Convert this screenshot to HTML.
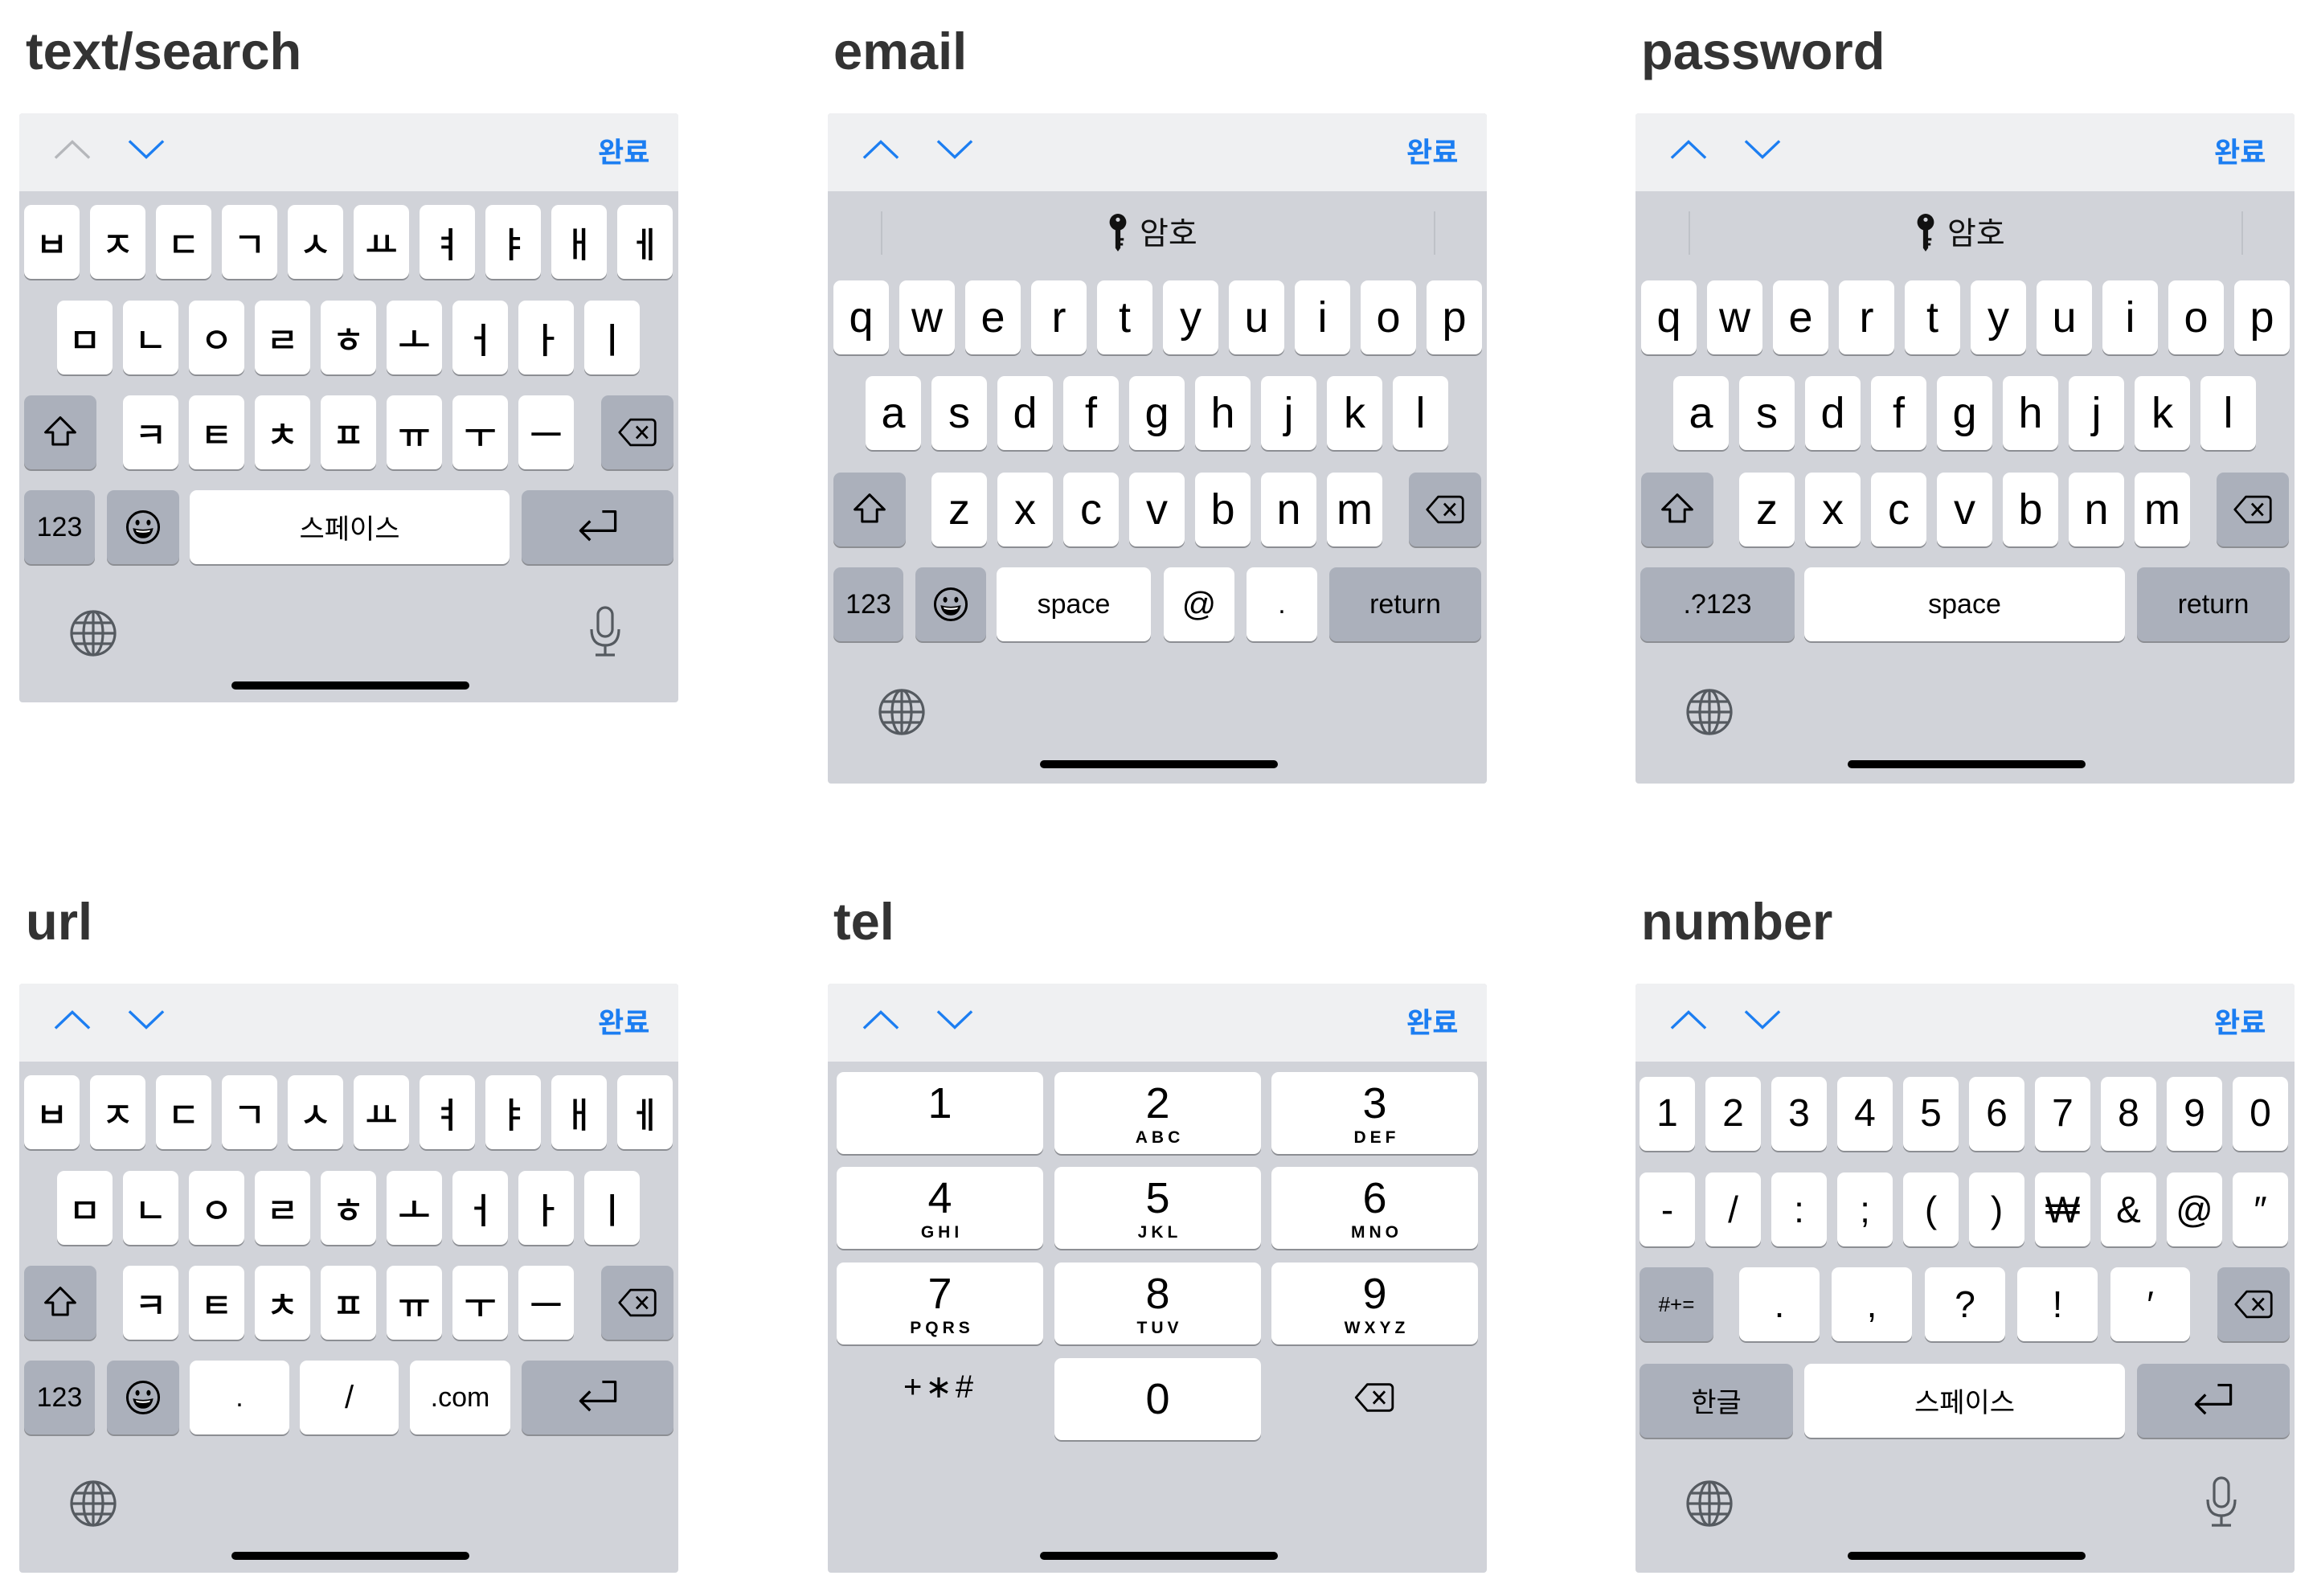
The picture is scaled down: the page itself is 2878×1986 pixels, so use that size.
<!DOCTYPE html>
<html><head><meta charset="utf-8"><style>
*{margin:0;padding:0;box-sizing:border-box}
body{width:2878px;height:1986px;background:#fff;position:relative;overflow:hidden;font-family:"Liberation Sans","Noto Sans CJK KR",sans-serif;color:#000}
.t{position:absolute;font-size:65px;font-weight:bold;color:#333;line-height:1}
.p{position:absolute;width:820px;background:#d1d3d9;border-radius:4px;overflow:hidden}
.hd{position:absolute;left:0;top:0;width:820px;height:97px;background:#eff0f2}
.k{position:absolute;height:92px;background:#fff;border-radius:9px;box-shadow:0 2px 0 #8c8e93;display:flex;align-items:center;justify-content:center;font-size:54px;line-height:1}
.g{background:#abb0bb}
.j{font-size:44px;font-family:"Noto Sans CJK KR",sans-serif;font-weight:500}
.s{font-size:34px}
.done{position:absolute;left:720px;top:24px;font-size:35px;color:#1c7ef2;font-family:"Noto Sans CJK KR",sans-serif;font-weight:bold;line-height:1.3}
.ch{position:absolute;top:30px}
.hb{position:absolute;height:10px;border-radius:5px;background:#000}
.ic{position:absolute}
.tk{position:absolute;height:102px;width:257px;background:#fff;border-radius:9px;box-shadow:0 2px 0 #8c8e93;text-align:center}
.tk b{display:block;font-weight:normal;font-size:54px;line-height:1;margin-top:12px}
.tk i{display:block;font-style:normal;font-weight:bold;font-size:21px;letter-spacing:5px;margin-top:4px;padding-left:5px}
</style></head><body>

<svg width="0" height="0" style="position:absolute">
<defs>
<symbol id="up" viewBox="0 0 50 30"><path d="M3 26 L25 5 L47 26" fill="none" stroke="currentColor" stroke-width="3.5"/></symbol>
<symbol id="dn" viewBox="0 0 50 30"><path d="M3 4 L25 25 L47 4" fill="none" stroke="currentColor" stroke-width="3.5"/></symbol>
<symbol id="shift" viewBox="0 0 40 40"><path d="M20 4 L4 20 H12 V33 H28 V20 H36 Z" fill="none" stroke="#000" stroke-width="2.6" stroke-linejoin="round"/></symbol>
<symbol id="bs" viewBox="0 0 46 34"><path d="M15 2 H40 a4 4 0 0 1 4 4 V28 a4 4 0 0 1 -4 4 H15 L2 17 Z" fill="none" stroke="#000" stroke-width="2.6" stroke-linejoin="round"/><path d="M22 10 L35 24 M35 10 L22 24" stroke="#000" stroke-width="2.6"/></symbol>
<symbol id="emo" viewBox="0 0 40 40"><circle cx="20" cy="20" r="17" fill="none" stroke="#000" stroke-width="2.6"/><ellipse cx="14" cy="15" rx="2.2" ry="3" fill="#000"/><ellipse cx="26" cy="15" rx="2.2" ry="3" fill="#000"/><path d="M9 21 Q20 24 31 21 Q29 32 20 32 Q11 32 9 21 Z" fill="#000"/><path d="M12 23 Q20 25 28 23 L27 25 Q20 27 13 25Z" fill="#fff"/></symbol>
<symbol id="ret" viewBox="0 0 50 44"><path d="M43 4 H45 V26 H6 M16 15 L5 26 L16 37" fill="none" stroke="#000" stroke-width="3" stroke-linejoin="round"/><path d="M30 4 H45" stroke="#000" stroke-width="3"/></symbol>
<symbol id="globe" viewBox="0 0 60 60"><g fill="none" stroke="#555a60" stroke-width="3.2"><circle cx="30" cy="30" r="27"/><ellipse cx="30" cy="30" rx="12" ry="27"/><path d="M30 3 V57 M3 30 H57 M7 17 H53 M7 43 H53"/></g></symbol>
<symbol id="mic" viewBox="0 0 44 66"><g fill="none" stroke="#555a60" stroke-width="3.2"><rect x="13" y="3" width="18" height="36" rx="9"/><path d="M5 30 Q5 50 22 50 Q39 50 39 30 M22 50 V62 M10 62 H34"/></g></symbol>
<symbol id="key" viewBox="0 0 24 50"><circle cx="12" cy="11" r="10" fill="#111"/><circle cx="12" cy="8" r="2.5" fill="#d1d3d9"/><path d="M9 18 H15 V42 L12 46 L9 42 Z M15 30 H19 V33 H15 Z M15 36 H18 V39 H15Z" fill="#111"/></symbol>
</defs></svg>

<div class="t" style="left:32px;top:31px">text/search</div>
<div class="t" style="left:1037px;top:31px">email</div>
<div class="t" style="left:2042px;top:31px">password</div>
<div class="t" style="left:32px;top:1114px">url</div>
<div class="t" style="left:1037px;top:1114px">tel</div>
<div class="t" style="left:2042px;top:1114px">number</div>

<!-- TEXT/SEARCH -->
<div class="p" style="left:24px;top:141px;height:733px">
<div class="hd"></div>
<svg class="ch" style="left:42px;color:#b5b7bb" width="48" height="30"><use href="#up"/></svg>
<svg class="ch" style="left:134px;color:#1c7ef2" width="48" height="30"><use href="#dn"/></svg>
<div class="done">완료</div>
<div class="k j" style="left:6px;top:114px;width:69px">ㅂ</div><div class="k j" style="left:88px;top:114px;width:69px">ㅈ</div><div class="k j" style="left:170px;top:114px;width:69px">ㄷ</div><div class="k j" style="left:252px;top:114px;width:69px">ㄱ</div><div class="k j" style="left:334px;top:114px;width:69px">ㅅ</div><div class="k j" style="left:416px;top:114px;width:69px">ㅛ</div><div class="k j" style="left:498px;top:114px;width:69px">ㅕ</div><div class="k j" style="left:580px;top:114px;width:69px">ㅑ</div><div class="k j" style="left:662px;top:114px;width:69px">ㅐ</div><div class="k j" style="left:744px;top:114px;width:69px">ㅔ</div>
<div class="k j" style="left:47px;top:233px;width:69px">ㅁ</div><div class="k j" style="left:129px;top:233px;width:69px">ㄴ</div><div class="k j" style="left:211px;top:233px;width:69px">ㅇ</div><div class="k j" style="left:293px;top:233px;width:69px">ㄹ</div><div class="k j" style="left:375px;top:233px;width:69px">ㅎ</div><div class="k j" style="left:457px;top:233px;width:69px">ㅗ</div><div class="k j" style="left:539px;top:233px;width:69px">ㅓ</div><div class="k j" style="left:621px;top:233px;width:69px">ㅏ</div><div class="k j" style="left:703px;top:233px;width:69px">ㅣ</div>
<div class="k g" style="left:6px;top:351px;width:90px"><svg width="46" height="46"><use href="#shift"/></svg></div>
<div class="k j" style="left:129px;top:351px;width:69px">ㅋ</div><div class="k j" style="left:211px;top:351px;width:69px">ㅌ</div><div class="k j" style="left:293px;top:351px;width:69px">ㅊ</div><div class="k j" style="left:375px;top:351px;width:69px">ㅍ</div><div class="k j" style="left:457px;top:351px;width:69px">ㅠ</div><div class="k j" style="left:539px;top:351px;width:69px">ㅜ</div><div class="k j" style="left:621px;top:351px;width:69px">ㅡ</div>
<div class="k g" style="left:724px;top:351px;width:90px"><svg width="50" height="36"><use href="#bs"/></svg></div>
<div class="k g s" style="left:6px;top:469px;width:88px">123</div>
<div class="k g" style="left:109px;top:469px;width:90px"><svg width="46" height="46"><use href="#emo"/></svg></div>
<div class="k s" style="left:212px;top:469px;width:398px;font-family:'Noto Sans CJK KR',sans-serif">스페이스</div>
<div class="k g" style="left:625px;top:469px;width:189px"><svg width="54" height="48"><use href="#ret"/></svg></div>
<svg class="ic" style="left:62px;top:617px" width="60" height="60"><use href="#globe"/></svg>
<svg class="ic" style="left:707px;top:612px" width="44" height="66"><use href="#mic"/></svg>
<div class="hb" style="left:264px;top:707px;width:296px"></div>
</div>

<!-- EMAIL -->
<div class="p" style="left:1030px;top:141px;height:834px">
<div class="hd"></div>
<svg class="ch" style="left:42px;color:#1c7ef2" width="48" height="30"><use href="#up"/></svg>
<svg class="ch" style="left:134px;color:#1c7ef2" width="48" height="30"><use href="#dn"/></svg>
<div class="done">완료</div>
<div style="position:absolute;left:66px;top:122px;width:2px;height:54px;background:#bfc2c8"></div>
<div style="position:absolute;left:754px;top:122px;width:2px;height:54px;background:#bfc2c8"></div>
<svg class="ic" style="left:348px;top:124px" width="26" height="52"><use href="#key"/></svg>
<div style="position:absolute;left:388px;top:124px;font-size:39px;line-height:1.2;font-family:'Noto Sans CJK KR',sans-serif;color:#111">암호</div>
<div class="k" style="left:7px;top:208px;width:69px">q</div><div class="k" style="left:89px;top:208px;width:69px">w</div><div class="k" style="left:171px;top:208px;width:69px">e</div><div class="k" style="left:253px;top:208px;width:69px">r</div><div class="k" style="left:335px;top:208px;width:69px">t</div><div class="k" style="left:417px;top:208px;width:69px">y</div><div class="k" style="left:499px;top:208px;width:69px">u</div><div class="k" style="left:581px;top:208px;width:69px">i</div><div class="k" style="left:663px;top:208px;width:69px">o</div><div class="k" style="left:745px;top:208px;width:69px">p</div>
<div class="k" style="left:47px;top:327px;width:69px">a</div><div class="k" style="left:129px;top:327px;width:69px">s</div><div class="k" style="left:211px;top:327px;width:69px">d</div><div class="k" style="left:293px;top:327px;width:69px">f</div><div class="k" style="left:375px;top:327px;width:69px">g</div><div class="k" style="left:457px;top:327px;width:69px">h</div><div class="k" style="left:539px;top:327px;width:69px">j</div><div class="k" style="left:621px;top:327px;width:69px">k</div><div class="k" style="left:703px;top:327px;width:69px">l</div>
<div class="k g" style="left:7px;top:447px;width:90px"><svg width="46" height="46"><use href="#shift"/></svg></div>
<div class="k" style="left:129px;top:447px;width:69px">z</div><div class="k" style="left:211px;top:447px;width:69px">x</div><div class="k" style="left:293px;top:447px;width:69px">c</div><div class="k" style="left:375px;top:447px;width:69px">v</div><div class="k" style="left:457px;top:447px;width:69px">b</div><div class="k" style="left:539px;top:447px;width:69px">n</div><div class="k" style="left:621px;top:447px;width:69px">m</div>
<div class="k g" style="left:723px;top:447px;width:90px"><svg width="50" height="36"><use href="#bs"/></svg></div>
<div class="k g s" style="left:7px;top:565px;width:87px">123</div>
<div class="k g" style="left:109px;top:565px;width:88px"><svg width="46" height="46"><use href="#emo"/></svg></div>
<div class="k s" style="left:210px;top:565px;width:192px">space</div>
<div class="k" style="left:418px;top:565px;width:88px;font-size:42px">@</div>
<div class="k s" style="left:521px;top:565px;width:88px">.</div>
<div class="k g s" style="left:624px;top:565px;width:189px">return</div>
<svg class="ic" style="left:62px;top:715px" width="60" height="60"><use href="#globe"/></svg>
<div class="hb" style="left:264px;top:805px;width:296px"></div>
</div>

<!-- PASSWORD -->
<div class="p" style="left:2035px;top:141px;height:834px">
<div class="hd"></div>
<svg class="ch" style="left:42px;color:#1c7ef2" width="48" height="30"><use href="#up"/></svg>
<svg class="ch" style="left:134px;color:#1c7ef2" width="48" height="30"><use href="#dn"/></svg>
<div class="done">완료</div>
<div style="position:absolute;left:66px;top:122px;width:2px;height:54px;background:#bfc2c8"></div>
<div style="position:absolute;left:754px;top:122px;width:2px;height:54px;background:#bfc2c8"></div>
<svg class="ic" style="left:348px;top:124px" width="26" height="52"><use href="#key"/></svg>
<div style="position:absolute;left:388px;top:124px;font-size:39px;line-height:1.2;font-family:'Noto Sans CJK KR',sans-serif;color:#111">암호</div>
<div class="k" style="left:7px;top:208px;width:69px">q</div><div class="k" style="left:89px;top:208px;width:69px">w</div><div class="k" style="left:171px;top:208px;width:69px">e</div><div class="k" style="left:253px;top:208px;width:69px">r</div><div class="k" style="left:335px;top:208px;width:69px">t</div><div class="k" style="left:417px;top:208px;width:69px">y</div><div class="k" style="left:499px;top:208px;width:69px">u</div><div class="k" style="left:581px;top:208px;width:69px">i</div><div class="k" style="left:663px;top:208px;width:69px">o</div><div class="k" style="left:745px;top:208px;width:69px">p</div>
<div class="k" style="left:47px;top:327px;width:69px">a</div><div class="k" style="left:129px;top:327px;width:69px">s</div><div class="k" style="left:211px;top:327px;width:69px">d</div><div class="k" style="left:293px;top:327px;width:69px">f</div><div class="k" style="left:375px;top:327px;width:69px">g</div><div class="k" style="left:457px;top:327px;width:69px">h</div><div class="k" style="left:539px;top:327px;width:69px">j</div><div class="k" style="left:621px;top:327px;width:69px">k</div><div class="k" style="left:703px;top:327px;width:69px">l</div>
<div class="k g" style="left:7px;top:447px;width:90px"><svg width="46" height="46"><use href="#shift"/></svg></div>
<div class="k" style="left:129px;top:447px;width:69px">z</div><div class="k" style="left:211px;top:447px;width:69px">x</div><div class="k" style="left:293px;top:447px;width:69px">c</div><div class="k" style="left:375px;top:447px;width:69px">v</div><div class="k" style="left:457px;top:447px;width:69px">b</div><div class="k" style="left:539px;top:447px;width:69px">n</div><div class="k" style="left:621px;top:447px;width:69px">m</div>
<div class="k g" style="left:723px;top:447px;width:90px"><svg width="50" height="36"><use href="#bs"/></svg></div>
<div class="k g s" style="left:6px;top:565px;width:192px">.?123</div>
<div class="k s" style="left:210px;top:565px;width:399px">space</div>
<div class="k g s" style="left:624px;top:565px;width:190px">return</div>
<svg class="ic" style="left:62px;top:715px" width="60" height="60"><use href="#globe"/></svg>
<div class="hb" style="left:264px;top:805px;width:296px"></div>
</div>

<!-- URL -->
<div class="p" style="left:24px;top:1224px;height:733px">
<div class="hd"></div>
<svg class="ch" style="left:42px;color:#1c7ef2" width="48" height="30"><use href="#up"/></svg>
<svg class="ch" style="left:134px;color:#1c7ef2" width="48" height="30"><use href="#dn"/></svg>
<div class="done">완료</div>
<div class="k j" style="left:6px;top:114px;width:69px">ㅂ</div><div class="k j" style="left:88px;top:114px;width:69px">ㅈ</div><div class="k j" style="left:170px;top:114px;width:69px">ㄷ</div><div class="k j" style="left:252px;top:114px;width:69px">ㄱ</div><div class="k j" style="left:334px;top:114px;width:69px">ㅅ</div><div class="k j" style="left:416px;top:114px;width:69px">ㅛ</div><div class="k j" style="left:498px;top:114px;width:69px">ㅕ</div><div class="k j" style="left:580px;top:114px;width:69px">ㅑ</div><div class="k j" style="left:662px;top:114px;width:69px">ㅐ</div><div class="k j" style="left:744px;top:114px;width:69px">ㅔ</div>
<div class="k j" style="left:47px;top:233px;width:69px">ㅁ</div><div class="k j" style="left:129px;top:233px;width:69px">ㄴ</div><div class="k j" style="left:211px;top:233px;width:69px">ㅇ</div><div class="k j" style="left:293px;top:233px;width:69px">ㄹ</div><div class="k j" style="left:375px;top:233px;width:69px">ㅎ</div><div class="k j" style="left:457px;top:233px;width:69px">ㅗ</div><div class="k j" style="left:539px;top:233px;width:69px">ㅓ</div><div class="k j" style="left:621px;top:233px;width:69px">ㅏ</div><div class="k j" style="left:703px;top:233px;width:69px">ㅣ</div>
<div class="k g" style="left:6px;top:351px;width:90px"><svg width="46" height="46"><use href="#shift"/></svg></div>
<div class="k j" style="left:129px;top:351px;width:69px">ㅋ</div><div class="k j" style="left:211px;top:351px;width:69px">ㅌ</div><div class="k j" style="left:293px;top:351px;width:69px">ㅊ</div><div class="k j" style="left:375px;top:351px;width:69px">ㅍ</div><div class="k j" style="left:457px;top:351px;width:69px">ㅠ</div><div class="k j" style="left:539px;top:351px;width:69px">ㅜ</div><div class="k j" style="left:621px;top:351px;width:69px">ㅡ</div>
<div class="k g" style="left:724px;top:351px;width:90px"><svg width="50" height="36"><use href="#bs"/></svg></div>
<div class="k g s" style="left:6px;top:469px;width:88px">123</div>
<div class="k g" style="left:109px;top:469px;width:90px"><svg width="46" height="46"><use href="#emo"/></svg></div>
<div class="k s" style="left:212px;top:469px;width:124px">.</div>
<div class="k s" style="left:349px;top:469px;width:123px;font-size:40px">/</div>
<div class="k s" style="left:486px;top:469px;width:125px">.com</div>
<div class="k g" style="left:625px;top:469px;width:189px"><svg width="54" height="48"><use href="#ret"/></svg></div>
<svg class="ic" style="left:62px;top:617px" width="60" height="60"><use href="#globe"/></svg>
<div class="hb" style="left:264px;top:707px;width:296px"></div>
</div>

<!-- TEL -->
<div class="p" style="left:1030px;top:1224px;height:733px">
<div class="hd"></div>
<svg class="ch" style="left:42px;color:#1c7ef2" width="48" height="30"><use href="#up"/></svg>
<svg class="ch" style="left:134px;color:#1c7ef2" width="48" height="30"><use href="#dn"/></svg>
<div class="done">완료</div>
<div class="tk" style="left:11px;top:110px"><b>1</b></div>
<div class="tk" style="left:282px;top:110px"><b>2</b><i>ABC</i></div>
<div class="tk" style="left:552px;top:110px"><b>3</b><i>DEF</i></div>
<div class="tk" style="left:11px;top:228px"><b>4</b><i>GHI</i></div>
<div class="tk" style="left:282px;top:228px"><b>5</b><i>JKL</i></div>
<div class="tk" style="left:552px;top:228px"><b>6</b><i>MNO</i></div>
<div class="tk" style="left:11px;top:347px"><b>7</b><i>PQRS</i></div>
<div class="tk" style="left:282px;top:347px"><b>8</b><i>TUV</i></div>
<div class="tk" style="left:552px;top:347px"><b>9</b><i>WXYZ</i></div>
<div style="position:absolute;left:11px;top:482px;width:257px;text-align:center;font-size:40px;line-height:1;letter-spacing:4px">+∗#</div>
<div class="tk" style="left:282px;top:466px;display:flex;align-items:center;justify-content:center;font-size:54px">0</div>
<svg class="ic" style="left:655px;top:495px" width="50" height="40"><use href="#bs"/></svg>
<div class="hb" style="left:264px;top:707px;width:296px"></div>
</div>

<!-- NUMBER -->
<div class="p" style="left:2035px;top:1224px;height:733px">
<div class="hd"></div>
<svg class="ch" style="left:42px;color:#1c7ef2" width="48" height="30"><use href="#up"/></svg>
<svg class="ch" style="left:134px;color:#1c7ef2" width="48" height="30"><use href="#dn"/></svg>
<div class="done">완료</div>
<div class="k" style="left:5px;top:116px;width:69px;font-size:48px">1</div><div class="k" style="left:87px;top:116px;width:69px;font-size:48px">2</div><div class="k" style="left:169px;top:116px;width:69px;font-size:48px">3</div><div class="k" style="left:251px;top:116px;width:69px;font-size:48px">4</div><div class="k" style="left:333px;top:116px;width:69px;font-size:48px">5</div><div class="k" style="left:415px;top:116px;width:69px;font-size:48px">6</div><div class="k" style="left:497px;top:116px;width:69px;font-size:48px">7</div><div class="k" style="left:579px;top:116px;width:69px;font-size:48px">8</div><div class="k" style="left:661px;top:116px;width:69px;font-size:48px">9</div><div class="k" style="left:743px;top:116px;width:69px;font-size:48px">0</div>
<div class="k" style="left:5px;top:235px;width:69px;font-size:46px">-</div><div class="k" style="left:87px;top:235px;width:69px;font-size:46px">/</div><div class="k" style="left:169px;top:235px;width:69px;font-size:46px">:</div><div class="k" style="left:251px;top:235px;width:69px;font-size:46px">;</div><div class="k" style="left:333px;top:235px;width:69px;font-size:46px">(</div><div class="k" style="left:415px;top:235px;width:69px;font-size:46px">)</div><div class="k" style="left:497px;top:235px;width:69px;font-size:46px">₩</div><div class="k" style="left:579px;top:235px;width:69px;font-size:46px">&amp;</div><div class="k" style="left:661px;top:235px;width:69px;font-size:46px">@</div><div class="k" style="left:743px;top:235px;width:69px;font-size:46px">″</div>
<div class="k g" style="left:5px;top:353px;width:92px;font-size:26px">#+=</div>
<div class="k" style="left:129px;top:353px;width:100px;font-size:46px">.</div><div class="k" style="left:244px;top:353px;width:100px;font-size:46px">,</div><div class="k" style="left:360px;top:353px;width:100px;font-size:46px">?</div><div class="k" style="left:475px;top:353px;width:100px;font-size:46px">!</div><div class="k" style="left:591px;top:353px;width:99px;font-size:46px">′</div>
<div class="k g" style="left:724px;top:353px;width:90px"><svg width="50" height="36"><use href="#bs"/></svg></div>
<div class="k g s" style="left:5px;top:473px;width:191px;font-family:'Noto Sans CJK KR',sans-serif">한글</div>
<div class="k s" style="left:210px;top:473px;width:399px;font-family:'Noto Sans CJK KR',sans-serif">스페이스</div>
<div class="k g" style="left:624px;top:473px;width:190px"><svg width="54" height="48"><use href="#ret"/></svg></div>
<svg class="ic" style="left:62px;top:617px" width="60" height="60"><use href="#globe"/></svg>
<svg class="ic" style="left:707px;top:612px" width="44" height="66"><use href="#mic"/></svg>
<div class="hb" style="left:264px;top:707px;width:296px"></div>
</div>

</body></html>
